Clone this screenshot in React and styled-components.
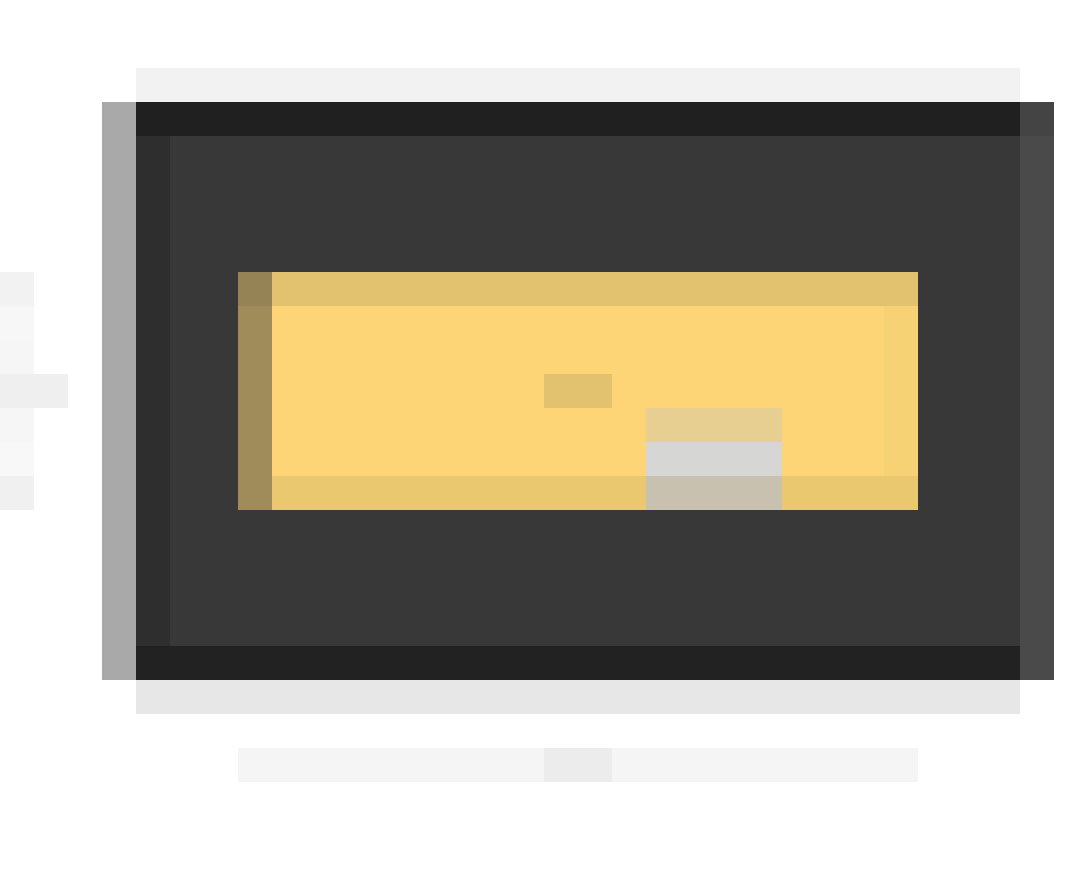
import React from 'react';
import styled, { createGlobalStyle } from 'styled-components';

const GlobalStyle = createGlobalStyle`
  html, body {
    margin: 0;
    padding: 0;
    background: #ffffff;
    font-family: "Liberation Sans", Arial, sans-serif;
  }
`;

const sideRows = [
  { w: 34, c: '#f2f2f2' },
  { w: 34, c: '#f7f7f7' },
  { w: 34, c: '#f6f6f6' },
  { w: 68, c: '#efefef' },
  { w: 34, c: '#f6f6f6' },
  { w: 34, c: '#f8f8f8' },
  { w: 34, c: '#f0f0f0' },
];

function App() {
  return (
    <>
      <GlobalStyle />
      <Page>
        <SideHint>
          {sideRows.map((r, i) => (
            <SideLine key={i} $width={r.w} $tone={r.c} />
          ))}
        </SideHint>

        <Frame>
          <Strip $tone="#f2f2f2" />
          <Window>
            <LeftRail />
            <Main>
              <TitleBar />
              <Body>
                <Card>
                  <CardTop />
                  <CardMiddle>
                    <CardEdge />
                    <CardContent />
                  </CardMiddle>
                  <CardBottom />
                  <Marker />
                  <Thumb>
                    <ThumbRow $tone="#e6cf90" />
                    <ThumbRow $tone="#d6d6d4" />
                    <ThumbRow $tone="#c9c1b0" />
                  </Thumb>
                </Card>
              </Body>
              <StatusBar />
            </Main>
            <RightRail />
          </Window>
          <Strip $tone="#e7e7e7" />
          <Caption>
            <CaptionDot />
          </Caption>
        </Frame>
      </Page>
    </>
  );
}

export default App;

const Page = styled.div`
  display: flex;
  gap: 34px;
  padding-top: 68px;
  width: 1080px;
  height: 893px;
  box-sizing: border-box;
  overflow: hidden;
`;

const SideHint = styled.div`
  display: flex;
  flex-direction: column;
  width: 68px;
  margin-top: 204px;
`;

const SideLine = styled.div`
  width: ${(p) => p.$width}px;
  height: 34px;
  background: ${(p) => p.$tone};
`;

const Frame = styled.div`
  display: flex;
  flex-direction: column;
  width: 952px;
`;

const Strip = styled.div`
  height: 34px;
  margin: 0 34px;
  background: ${(p) => p.$tone};
`;

const Window = styled.div`
  display: flex;
  height: 578px;
`;

const LeftRail = styled.div`
  width: 34px;
  background: #a9a9a9;
`;

const RightRail = styled.div`
  width: 34px;
  background: linear-gradient(#444444 0 34px, #4a4a4a 34px);
`;

const Main = styled.div`
  flex: 1;
  display: flex;
  flex-direction: column;
`;

const TitleBar = styled.div`
  height: 34px;
  background: #202020;
`;

const StatusBar = styled.div`
  height: 34px;
  background: #222222;
`;

const Body = styled.div`
  flex: 1;
  background: #383838;
  border-left: 34px solid #2e2e2e;
  padding: 136px 0 0 68px;
`;

const Card = styled.div`
  position: relative;
  display: flex;
  flex-direction: column;
  width: 680px;
  height: 238px;
`;

const CardTop = styled.div`
  height: 34px;
  background: linear-gradient(90deg, #958255 0 34px, #e2c26e 34px);
`;

const CardBottom = styled.div`
  height: 34px;
  background: linear-gradient(90deg, #a08c5a 0 34px, #eac870 34px);
`;

const CardMiddle = styled.div`
  flex: 1;
  display: flex;
`;

const CardEdge = styled.div`
  width: 34px;
  background: #a08c5a;
`;

const CardContent = styled.div`
  flex: 1;
  background: #fdd576;
  border-right: 34px solid #f6d274;
`;

const Marker = styled.div`
  position: absolute;
  left: 306px;
  top: 102px;
  width: 68px;
  height: 34px;
  background: #e2c26e;
`;

const Thumb = styled.div`
  position: absolute;
  left: 408px;
  top: 136px;
  width: 136px;
  display: flex;
  flex-direction: column;
`;

const ThumbRow = styled.div`
  height: 34px;
  background: ${(p) => p.$tone};
`;

const Caption = styled.div`
  position: relative;
  height: 34px;
  margin: 34px 136px 0;
  background: #f5f5f5;
`;

const CaptionDot = styled.div`
  position: absolute;
  left: 306px;
  top: 0;
  width: 68px;
  height: 34px;
  background: #ececec;
`;
